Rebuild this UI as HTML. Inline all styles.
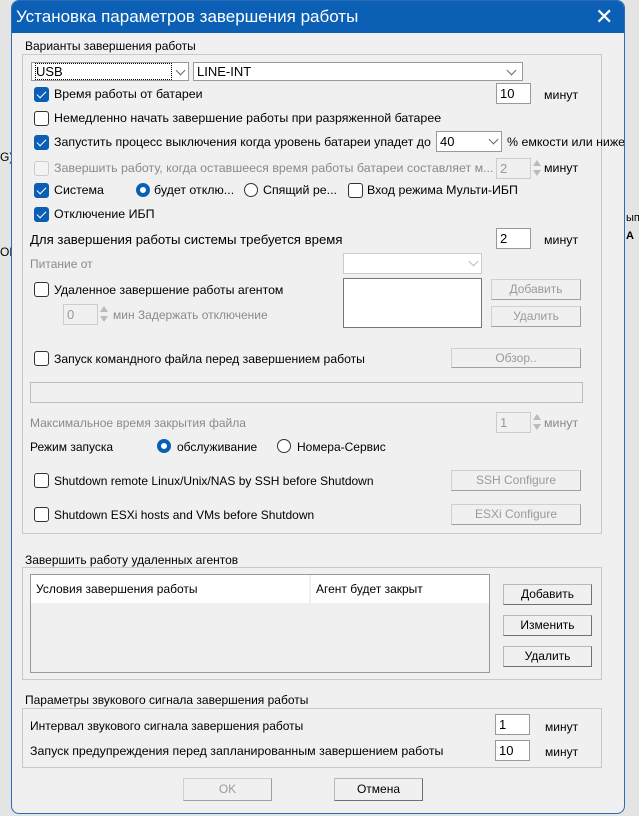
<!DOCTYPE html><html><head><meta charset="utf-8"><style>
*{box-sizing:border-box}
body{margin:0;width:639px;height:816px;overflow:hidden;background:#e4e4e4;font-family:"Liberation Sans",sans-serif;font-size:12px;color:#000;position:relative}
.a{position:absolute;white-space:nowrap}
.t{font-size:12.4px}
.dlg{position:absolute;left:11px;top:0;width:614px;height:814px;background:#f0f0f0;border:1px solid #2a6cb8;border-radius:8px;overflow:hidden}
.tb{position:absolute;left:0;top:0;width:100%;height:32px;background:#0b60b5;color:#fff;font-size:17px}
.grp{position:absolute;border:1px solid #c8c8c8}
.cb{position:absolute;width:15px;height:15px;border:1px solid #333;border-radius:3px;background:#fff}
.cb.on{background:#0a5fb4;border-color:#0a5fb4}
.cb.on:after{content:"";position:absolute;left:4px;top:1px;width:4px;height:8px;border:solid #fff;border-width:0 1.5px 1.5px 0;transform:rotate(45deg)}
.cb.dis{border-color:#ccc;background:#f3f3f3}
.rb{position:absolute;width:14px;height:14px;border:1px solid #333;border-radius:50%;background:#fff}
.rb.on{border:4px solid #0a5fb4}
.in{position:absolute;background:#fff;border:1px solid #999;padding:2px 3px;font-size:13px}
.in.dis{background:#f0f0f0;border-color:#ccc;color:#999}
.btn{position:absolute;background:#f0f0f0;border:1px solid #b8b8b8;border-right-color:#707070;border-bottom-color:#707070;text-align:center;font-size:12px;line-height:18px}
.btn.dis{color:#9a9a9a;border-color:#d0d0d0;border-right-color:#a0a0a0;border-bottom-color:#a0a0a0}
.g{color:#8a8a8a}
.chev{position:absolute;width:7px;height:7px;border:solid #666;border-width:0 1px 1px 0;transform:rotate(45deg)}
.sp{position:absolute;width:0;height:0;border-left:4px solid transparent;border-right:4px solid transparent}
</style></head><body>
<div class="a" style="left:0;top:150px;font-size:12px">G)</div>
<div class="a" style="left:0;top:245px">OF</div>
<div class="a" style="left:626px;top:212px;font-size:11px">ып</div>
<div class="a" style="left:626px;top:230px;font-size:11px;font-weight:bold">A</div>
<div class="dlg">
<div class="tb"><span class="a" style="left:4px;top:6px">Установка параметров завершения работы</span><span class="a" style="left:583px;top:3px;font-size:22px">✕</span></div>
<div class="a" style="left:13px;top:38px">Варианты завершения работы</div>
<div class="grp" style="left:10px;top:53px;width:580px;height:480px"></div>
<div class="in" style="left:19px;top:61px;width:158px;height:19px;padding:1px 3px"><span style="border:1px dotted #000">USB&nbsp;&nbsp;&nbsp;&nbsp;&nbsp;&nbsp;&nbsp;&nbsp;&nbsp;&nbsp;&nbsp;&nbsp;&nbsp;&nbsp;&nbsp;&nbsp;&nbsp;&nbsp;&nbsp;&nbsp;&nbsp;&nbsp;&nbsp;&nbsp;&nbsp;&nbsp;&nbsp;&nbsp;&nbsp;&nbsp;</span></div><div class="chev" style="left:165px;top:66px"></div>
<div class="in" style="left:181px;top:61px;width:330px;height:19px;padding:1px 3px">LINE-INT</div><div class="chev" style="left:496px;top:66px"></div>
<div class="cb on" style="left:22px;top:86px"></div><div class="a t" style="left:42px;top:86px">Время работы от батареи</div>
<div class="in" style="left:484px;top:82px;width:35px;height:21px">10</div><div class="a t" style="left:532px;top:87px">минут</div>
<div class="cb" style="left:22px;top:110px"></div><div class="a t" style="left:42px;top:110px">Немедленно начать завершение работы при разряженной батарее</div>
<div class="cb on" style="left:22px;top:134px"></div><div class="a t" style="left:42px;top:134px">Запустить процесс выключения когда уровень батареи упадет до</div>
<div class="in" style="left:424px;top:130px;width:66px;height:21px">40</div><div class="chev" style="left:478px;top:135px"></div><div class="a t" style="left:495px;top:134px">% емкости или ниже</div>
<div class="cb dis" style="left:22px;top:160px"></div><div class="a g t" style="left:42px;top:160px">Завершить работу, когда оставшееся время работы батареи составляет м...</div>
<div class="in dis" style="left:484px;top:157px;width:35px;height:21px">2</div><div class="sp" style="left:521px;top:159px;border-bottom:6px solid #bbb"></div><div class="sp" style="left:521px;top:169px;border-top:6px solid #bbb"></div><div class="a t" style="left:532px;top:160px">минут</div>
<div class="cb on" style="left:22px;top:182px"></div><div class="a t" style="left:42px;top:182px">Система</div>
<div class="rb on" style="left:124px;top:182px"></div><div class="a t" style="left:142px;top:182px">будет отклю...</div>
<div class="rb" style="left:232px;top:182px"></div><div class="a t" style="left:251px;top:182px">Спящий ре...</div>
<div class="cb" style="left:336px;top:182px"></div><div class="a t" style="left:355px;top:182px">Вход режима Мульти-ИБП</div>
<div class="cb on" style="left:22px;top:206px"></div><div class="a t" style="left:42px;top:206px">Отключение ИБП</div>
<div class="a" style="left:18px;top:231px;font-size:13.2px">Для завершения работы системы требуется время</div>
<div class="in" style="left:484px;top:227px;width:35px;height:21px">2</div><div class="a t" style="left:532px;top:232px">минут</div>
<div class="a g" style="left:18px;top:256px">Питание от</div>
<div class="in" style="left:331px;top:252px;width:139px;height:21px;border-color:#ccc"></div><div class="chev" style="left:458px;top:257px;border-color:#bbb"></div>
<div class="cb" style="left:22px;top:281px"></div><div class="a" style="left:42px;top:282px;font-size:12.3px">Удаленное завершение работы агентом</div>
<div class="in" style="left:331px;top:277px;width:139px;height:50px;border-color:#777"></div>
<div class="btn dis" style="left:479px;top:278px;width:90px;height:21px">Добавить</div>
<div class="btn dis" style="left:479px;top:305px;width:90px;height:21px">Удалить</div>
<div class="in dis" style="left:51px;top:303px;width:35px;height:21px">0</div><div class="sp" style="left:88px;top:305px;border-bottom:6px solid #bbb"></div><div class="sp" style="left:88px;top:315px;border-top:6px solid #bbb"></div><div class="a g" style="left:101px;top:307px">мин Задержать отключение</div>
<div class="cb" style="left:22px;top:350px"></div><div class="a" style="left:42px;top:351px;font-size:12.2px">Запуск командного файла перед завершением работы</div>
<div class="btn dis" style="left:439px;top:347px;width:130px;height:20px">Обзор..</div>
<div class="in" style="left:18px;top:381px;width:553px;height:21px;background:#f0f0f0;border-color:#bbb"></div>
<div class="a g" style="left:18px;top:415px">Максимальное время закрытия файла</div>
<div class="in dis" style="left:484px;top:411px;width:35px;height:21px">1</div><div class="sp" style="left:521px;top:413px;border-bottom:6px solid #bbb"></div><div class="sp" style="left:521px;top:423px;border-top:6px solid #bbb"></div><div class="a g t" style="left:532px;top:415px">минут</div>
<div class="a" style="left:18px;top:439px">Режим запуска</div>
<div class="rb on" style="left:145px;top:438px"></div><div class="a" style="left:165px;top:439px">обслуживание</div>
<div class="rb" style="left:265px;top:438px"></div><div class="a" style="left:285px;top:439px">Номера-Сервис</div>
<div class="cb" style="left:22px;top:472px"></div><div class="a" style="left:42px;top:473px">Shutdown remote Linux/Unix/NAS by SSH before Shutdown</div>
<div class="btn dis" style="left:439px;top:469px;width:130px;height:21px">SSH Configure</div>
<div class="cb" style="left:22px;top:506px"></div><div class="a" style="left:42px;top:507px">Shutdown ESXi hosts and VMs before Shutdown</div>
<div class="btn dis" style="left:439px;top:503px;width:130px;height:21px">ESXi Configure</div>

<div class="a" style="left:13px;top:552px">Завершить работу удаленных агентов</div>
<div class="grp" style="left:10px;top:566px;width:580px;height:113px"></div>
<div class="a" style="left:18px;top:573px;width:460px;height:99px;border:1px solid #999;background:#f0f0f0"></div>
<div class="a" style="left:19px;top:574px;width:278px;height:28px;background:#fff;padding:7px 5px">Условия завершения работы</div>
<div class="a" style="left:299px;top:574px;width:178px;height:28px;background:#fff;padding:7px 5px">Агент будет закрыт</div>
<div class="btn" style="left:491px;top:583px;width:89px;height:21px">Добавить</div>
<div class="btn" style="left:491px;top:614px;width:89px;height:21px">Изменить</div>
<div class="btn" style="left:491px;top:645px;width:89px;height:21px">Удалить</div>

<div class="a" style="left:13px;top:692px">Параметры звукового сигнала завершения работы</div>
<div class="grp" style="left:10px;top:707px;width:580px;height:60px"></div>
<div class="a" style="left:18px;top:718px">Интервал звукового сигнала завершения работы</div>
<div class="in" style="left:483px;top:713px;width:35px;height:21px">1</div><div class="a" style="left:533px;top:719px">минут</div>
<div class="a" style="left:18px;top:743px;font-size:12.4px">Запуск предупреждения перед запланированным завершением работы</div>
<div class="in" style="left:483px;top:739px;width:35px;height:21px">10</div><div class="a" style="left:533px;top:744px">минут</div>
<div class="btn dis" style="left:171px;top:777px;width:89px;height:23px;line-height:21px">OK</div>
<div class="btn" style="left:322px;top:777px;width:89px;height:23px;line-height:21px">Отмена</div>
</div>
</body></html>
